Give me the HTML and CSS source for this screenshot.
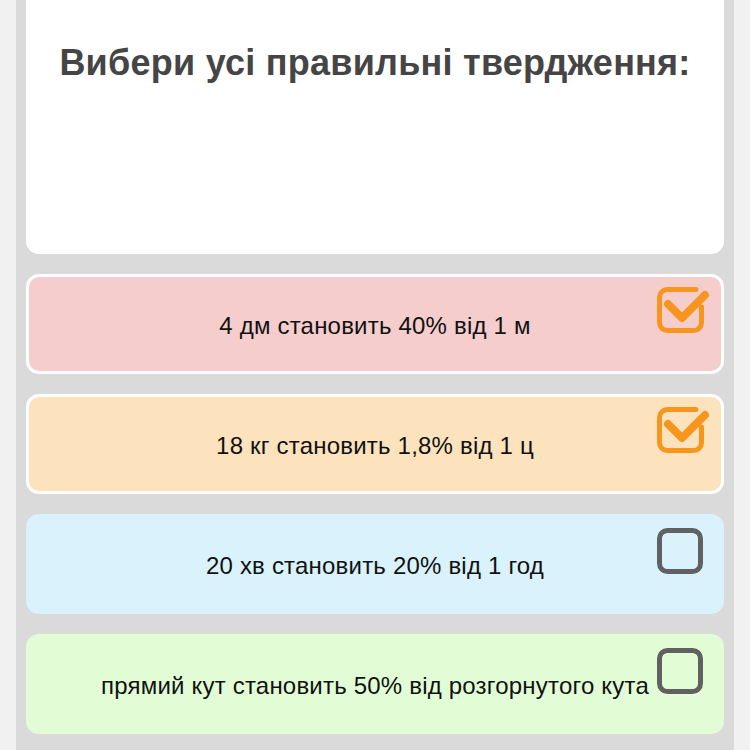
FILE: index.html
```html
<!DOCTYPE html>
<html lang="uk">
<head>
<meta charset="utf-8">
<link rel="stylesheet" href="styles.css">
</head>
<body>
<div class="main">
  <div class="card">
    <h1 class="title">Вибери усі правильні твердження:</h1>
  </div>
  <div class="options">
    <div class="option pink selected">
      <span class="label">4 дм становить 40% від 1 м</span>
      <svg class="check" width="60" height="54" viewBox="0 0 60 54">
        <path d="M42 5.5 H13.5 A8 8 0 0 0 5.5 13.5 V38.5 A8 8 0 0 0 13.5 46.5 H39.5 A8 8 0 0 0 47.5 38.5 V23" fill="none" stroke="#f7951d" stroke-width="5" stroke-linecap="round"/>
        <path d="M14 20 L28 34 L51 11" fill="none" stroke="#f7951d" stroke-width="8" stroke-linecap="round" stroke-linejoin="round"/>
      </svg>
    </div>
    <div class="option orange selected">
      <span class="label">18 кг становить 1,8% від 1 ц</span>
      <svg class="check" width="60" height="54" viewBox="0 0 60 54">
        <path d="M42 5.5 H13.5 A8 8 0 0 0 5.5 13.5 V38.5 A8 8 0 0 0 13.5 46.5 H39.5 A8 8 0 0 0 47.5 38.5 V23" fill="none" stroke="#f7951d" stroke-width="5" stroke-linecap="round"/>
        <path d="M14 20 L28 34 L51 11" fill="none" stroke="#f7951d" stroke-width="8" stroke-linecap="round" stroke-linejoin="round"/>
      </svg>
    </div>
    <div class="option blue">
      <span class="label">20 хв становить 20% від 1 год</span>
      <svg class="box" width="50" height="50" viewBox="0 0 50 50">
        <rect x="3.5" y="3.5" width="41" height="41" rx="8" fill="none" stroke="#616161" stroke-width="5"/>
      </svg>
    </div>
    <div class="option green">
      <span class="label">прямий кут становить 50% від розгорнутого кута</span>
      <svg class="box" width="50" height="50" viewBox="0 0 50 50">
        <rect x="3.5" y="3.5" width="41" height="41" rx="8" fill="none" stroke="#616161" stroke-width="5"/>
      </svg>
    </div>
  </div>
</div>
</body>
</html>
```
FILE: styles.css
```css
html, body {
  margin: 0;
  padding: 0;
  background: #f1f1f1;
  height: 750px;
  overflow: hidden;
}
.main {
  width: 698px;
  margin: 0 auto;
  padding: 0 10px;
  background: #dadada;
  height: 750px;
}
.card {
  background: #ffffff;
  height: 254px;
  border-radius: 0 0 13px 13px;
  padding-top: 43px;
  box-sizing: border-box;
}
.title {
  margin: 0;
  font-family: "Liberation Sans", Arial, sans-serif;
  font-weight: bold;
  font-size: 36px;
  letter-spacing: 0.25px;
  line-height: 40px;
  color: #454545;
  text-align: center;
}
.options {
  display: flex;
  flex-direction: column;
  gap: 20px;
  margin-top: 20px;
}
.option {
  position: relative;
  height: 100px;
  box-sizing: border-box;
  border: 3px solid transparent;
  border-radius: 13px;
  padding-top: 3px;
  display: flex;
  align-items: center;
  justify-content: center;
  font-family: "Liberation Sans", Arial, sans-serif;
  font-size: 24px;
  letter-spacing: 0.2px;
  color: #111111;
}
.option.selected {
  border-color: #ffffff;
}
.pink { background: #f6cdcd; }
.orange { background: #fce3bd; }
.blue { background: #daf2fc; }
.green { background: #e2fdd5; }
.label {
  white-space: nowrap;
}
.check {
  position: absolute;
  top: 7px;
  right: 7px;
}
.box {
  position: absolute;
  top: 10px;
  right: 15px;
}
```
